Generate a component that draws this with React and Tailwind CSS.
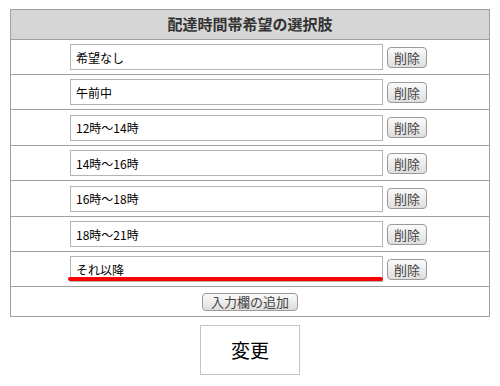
import React from "react";

const rows = [
    { label: "希望なし", h: "h-[35px]" },
    { label: "午前中", h: "h-[35px]" },
    { label: "12時～14時", h: "h-[36px]" },
    { label: "14時～16時", h: "h-[35px]" },
    { label: "16時～18時", h: "h-[36px]" },
    { label: "18時～21時", h: "h-[35px]" },
    { label: "それ以降", h: "h-[35px]", marked: true },
];

const font = { fontFamily: '"MS PGothic", "Noto Sans CJK JP", sans-serif' };

const SmallButton = ({ children, className = "" }) => (
    <button
        className={`flex items-center justify-center rounded-[4px] border border-[#9a9a9a] bg-gradient-to-b from-[#fbfbfb] to-[#dedede] text-[13px] leading-none text-[#444] ${className}`}
    >
        {children}
    </button>
);

export default function App() {
    return (
        <div className="min-h-screen w-[500px] bg-white pt-[9px]" style={font}>
            <div className="ml-[10px] w-[480px] border border-[#a0a0a0]">
                {/* header */}
                <div className="flex h-[30px] items-center justify-center border-b border-[#a0a0a0] bg-[#d6d6d6] text-[15px] font-bold text-[#333]">
                    配達時間帯希望の選択肢
                </div>

                {rows.map((row) => (
                    <div key={row.label} className={`relative flex items-center gap-[4px] border-b border-[#a0a0a0] pl-[59px] ${row.h}`}>
                        <input
                            readOnly
                            value={row.label}
                            className="h-[26px] w-[313px] border border-[#b4b4b4] bg-white px-[5px] text-[12px] text-black outline-none"
                            style={font}
                        />
                        <SmallButton className="h-[21px] w-[40px]">削除</SmallButton>
                        {row.marked && (
                            <div className="absolute left-[57px] top-[25px] h-[4px] w-[315px] rounded-full bg-[#ff0000]" />
                        )}
                    </div>
                ))}

                {/* add row */}
                <div className="flex h-[29px] items-center justify-center">
                    <SmallButton className="h-[18px] w-[96px]">入力欄の追加</SmallButton>
                </div>
            </div>

            <div className="mt-[8px] flex justify-center">
                <button className="flex h-[50px] w-[100px] items-center justify-center border border-[#c4c4c4] bg-white text-[19px] text-black">
                    変更
                </button>
            </div>
        </div>
    );
}
